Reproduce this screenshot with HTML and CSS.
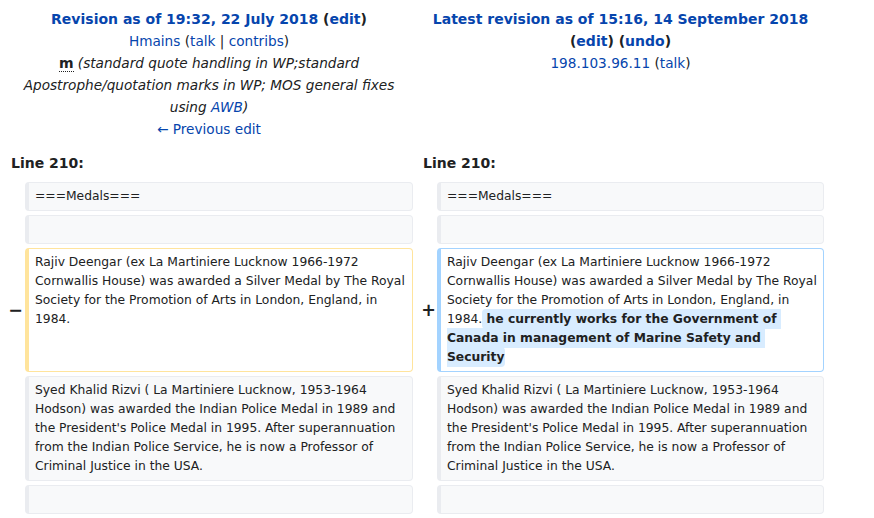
FILE: index.html
```html
<!DOCTYPE html>
<html lang="en">
<head>
<meta charset="utf-8">
<title>Diff</title>
<link rel="stylesheet" href="styles.css">
</head>
<body>
<div class="diff">
  <div class="title">
    <div class="rev"><a href="#">Revision as of 19:32, 22 July 2018</a> <span class="paren">(<a href="#">edit</a>)</span></div>
    <div class="meta"><a href="#">Hmains</a> (<a href="#">talk</a> | <a href="#">contribs</a>)</div>
    <div class="meta"><abbr class="minor">m</abbr> <span class="comment">(standard quote handling in WP;standard Apostrophe/quotation marks in WP; MOS general fixes using <a href="#">AWB</a>)</span></div>
    <div class="meta"><a href="#">← Previous edit</a></div>
  </div>
  <div class="title">
    <div class="rev"><a href="#">Latest revision as of 15:16, 14 September 2018</a> <span class="paren">(<a href="#">edit</a>)</span> <span class="paren">(<a href="#">undo</a>)</span></div>
    <div class="meta"><a href="#">198.103.96.11</a> (<a href="#">talk</a>)</div>
  </div>

  <div class="lineno">Line 210:</div>
  <div class="lineno">Line 210:</div>

  <div class="marker"></div>
  <div class="cell context">===Medals===</div>
  <div class="marker"></div>
  <div class="cell context">===Medals===</div>

  <div class="marker"></div>
  <div class="cell context"></div>
  <div class="marker"></div>
  <div class="cell context"></div>

  <div class="marker del">−</div>
  <div class="cell deleted">Rajiv Deengar (ex La Martiniere Lucknow 1966-1972 Cornwallis House) was awarded a Silver Medal by The Royal Society for the Promotion of Arts in London, England, in 1984.</div>
  <div class="marker add">+</div>
  <div class="cell added">Rajiv Deengar (ex La Martiniere Lucknow 1966-1972 Cornwallis House) was awarded a Silver Medal by The Royal Society for the Promotion of Arts in London, England, in 1984.<ins class="change"> he currently works for the Government of Canada in management of Marine Safety and Security</ins></div>

  <div class="marker"></div>
  <div class="cell context">Syed Khalid Rizvi ( La Martiniere Lucknow, 1953-1964 Hodson) was awarded the Indian Police Medal in 1989 and the President's Police Medal in 1995. After superannuation from the Indian Police Service, he is now a Professor of Criminal Justice in the USA.</div>
  <div class="marker"></div>
  <div class="cell context">Syed Khalid Rizvi ( La Martiniere Lucknow, 1953-1964 Hodson) was awarded the Indian Police Medal in 1989 and the President's Police Medal in 1995. After superannuation from the Indian Police Service, he is now a Professor of Criminal Justice in the USA.</div>

  <div class="marker"></div>
  <div class="cell context"></div>
  <div class="marker"></div>
  <div class="cell context"></div>
</div>
</body>
</html>
```
FILE: styles.css
```css
html, body {
  margin: 0;
  padding: 0;
  background: #ffffff;
}
body {
  font-family: "DejaVu Sans", sans-serif;
  font-size: 14px;
  color: #202122;
}
a {
  color: #0645ad;
  text-decoration: none;
}
.diff {
  display: grid;
  grid-template-columns: 16px 388px 16px 387px;
  column-gap: 4px;
  row-gap: 4px;
  padding: 8px 0 0 5px;
}
.title {
  grid-column: span 2;
  text-align: center;
  line-height: 22px;
}
.rev {
  font-weight: bold;
}
.meta {
  font-size: 13.65px;
}
.paren {
  font-weight: bold;
}
.minor {
  font-weight: bold;
  font-size: 14px;
  text-decoration: none;
  border-bottom: 1px dotted #202122;
}
.comment {
  font-style: italic;
}
.lineno {
  grid-column: span 2;
  font-weight: bold;
  line-height: 22px;
  padding: 8px 0 4px 6px;
}
.marker {
  display: flex;
  align-items: center;
  justify-content: flex-end;
  font-weight: bold;
  font-size: 17.5px;
  line-height: 1.2;
  margin-right: -2px;
}
.marker.add {
  margin-right: -3px;
}
.cell {
  font-size: 12.32px;
  line-height: 19px;
  white-space: pre-wrap;
  overflow-wrap: break-word;
  min-height: 19px;
  padding: 4px 6px;
  border-style: solid;
  border-width: 1px 1px 1px 4px;
  border-radius: 4px;
}
.context {
  background: #f8f9fa;
  border-color: #eaecf0;
  color: #202122;
}
.deleted {
  background: #ffffff;
  border-color: #ffe49c;
}
.added {
  background: #ffffff;
  border-color: #a3d3ff;
}
.change {
  font-weight: bold;
  text-decoration: none;
  background: #d8ecff;
  padding: 0.25em 0;
  border-radius: 0.33em;
}
```
